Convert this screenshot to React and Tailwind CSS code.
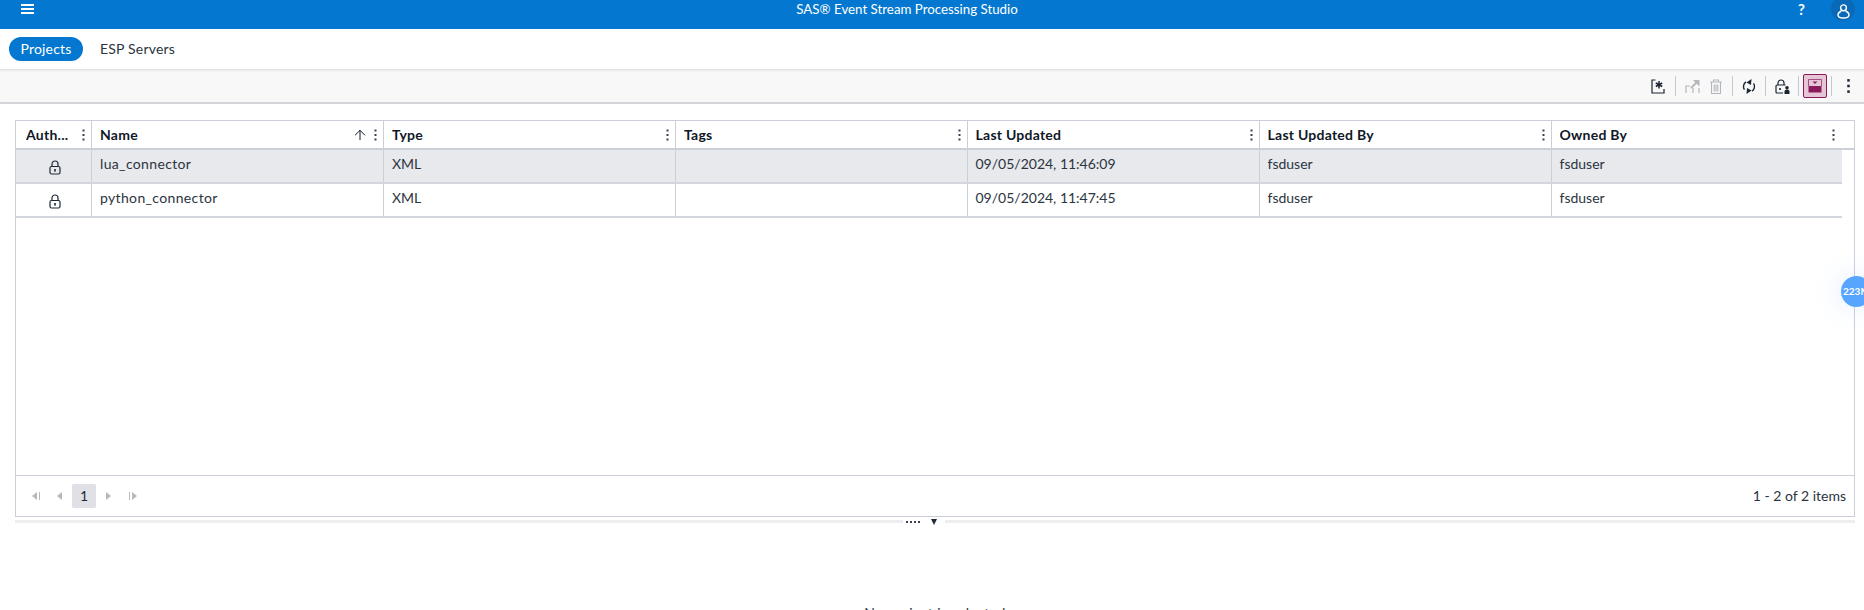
import { ArrowUp } from 'lucide-react'

const FONT = "font-['Lato','Noto_Sans',sans-serif]"
const GRID = 'grid grid-cols-[76px_292px_292px_291.5px_292px_292px_1fr]'

const columns = ['Auth...', 'Name', 'Type', 'Tags', 'Last Updated', 'Last Updated By', 'Owned By']

const rows = [
  { name: 'lua_connector', type: 'XML', updated: '09/05/2024, 11:46:09', by: 'fsduser', owner: 'fsduser', selected: true },
  { name: 'python_connector', type: 'XML', updated: '09/05/2024, 11:47:45', by: 'fsduser', owner: 'fsduser' },
]

function Dots({ className = '' }) {
  return (
    <svg width="3" height="12" viewBox="0 0 3 12" className={className} fill="currentColor">
      <rect x="0.5" y="0.5" width="2" height="2" />
      <rect x="0.5" y="5" width="2" height="2" />
      <rect x="0.5" y="9.5" width="2" height="2" />
    </svg>
  )
}

function Lock() {
  return (
    <svg width="12" height="15" viewBox="0 0 12 15" fill="none" stroke="#1f2937" strokeWidth="1.2">
      <path d="M3 6.5V4a3 3 0 0 1 6 0v2.5" />
      <rect x="1" y="6.5" width="10" height="7.5" rx="1.5" />
      <rect x="5.2" y="9" width="1.6" height="2.6" fill="#1f2937" stroke="none" />
    </svg>
  )
}

function Sep() {
  return <div className="h-5 w-px bg-[#c4c7cc]" />
}

function Toolbar() {
  return (
    <div className="mr-[14.5px] flex h-[34px] items-center justify-end">
      <svg width="14" height="15" viewBox="0 0 14 15" fill="none" stroke="#1b2533" strokeWidth="1.2">
        <path d="M4.500 1H1v13h12v-4" />
        <path d="M8 2v7.500M4.800 4l6.400 3.500M11.200 4l-6.400 3.500" strokeWidth="1.500" />
      </svg>
      <div className="ml-[10px]"><Sep /></div>
      <svg className="ml-[9px]" width="15" height="15" viewBox="0 0 15 15" fill="none" stroke="#b3b7bc" strokeWidth="1.2">
        <path d="M1 14V7h4M8 14V9" />
        <path d="M6 9l6-6" strokeWidth="1.800" />
        <path d="M8 1h6.500v6.500z" fill="#b3b7bc" stroke="none" />
        <path d="M14 9v5" />
      </svg>
      <svg className="ml-[10px]" width="12" height="15" viewBox="0 0 12 15" fill="none" stroke="#b3b7bc" strokeWidth="1.1">
        <path d="M0 3h12M3.500 3V1h5v2M1.500 3v11.500h9V3M4.200 5.500v7M6 5.500v7M7.800 5.500v7" />
      </svg>
      <div className="ml-[10px]"><Sep /></div>
      <svg className="ml-[9px]" width="14" height="15" viewBox="0 0 14 15" fill="none" stroke="#1b2533" strokeWidth="1.400">
        <path d="M4 2.800A5.800 5.800 0 0 0 2.400 10.700" />
        <path d="M10 12.200a5.800 5.800 0 0 0 1.600-7.900" />
        <path d="M9.500 0L4.500 3.500 9 6z" fill="#1b2533" stroke="none" />
        <path d="M4.500 15l5-3.500L5 9z" fill="#1b2533" stroke="none" />
      </svg>
      <div className="ml-[9px]"><Sep /></div>
      <svg className="ml-[9px]" width="15" height="15" viewBox="0 0 15 15" fill="none" stroke="#1b2533" strokeWidth="1.200">
        <path d="M3 6V4a3 3 0 0 1 6 0v2" />
        <path d="M8 14H2a1 1 0 0 1-1-1V7a1 1 0 0 1 1-1h8.500" />
        <circle cx="5" cy="10" r="1.100" fill="#1b2533" stroke="none" />
        <circle cx="12" cy="8.700" r="1.800" fill="#1b2533" stroke="none" />
        <path d="M9.500 15v-2.500a2.500 2 0 0 1 5 0V15z" fill="#1b2533" stroke="none" />
      </svg>
      <div className="ml-[8px]"><Sep /></div>
      <div className="ml-[4px] flex h-6 w-6 items-center justify-center rounded-[2px] border border-[#8b1a5c] bg-[#e6c6d6]">
        <svg width="16" height="16" viewBox="0 0 16 16">
          <rect x="1.500" y="8" width="13" height="6.500" fill="#8b1a5c" />
          <path d="M1.500 8V1.500h13V8" fill="none" stroke="#8b1a5c" strokeWidth="0.700" />
          <path d="M5.500 3.500h5L8 6z" fill="#8b1a5c" />
        </svg>
      </div>
      <div className="ml-[4px]"><Sep /></div>
      <Dots className="ml-[14.5px] scale-[1.25] text-[#1b2533]" />
    </div>
  )
}

function Pager() {
  return (
    <div className="flex items-center text-[#b5b8bd]">
      <svg className="ml-[16px]" width="9" height="8" viewBox="0 0 9 8" fill="currentColor">
        <path d="M5 0v8L0 4zM7 0h1v8H7z" />
      </svg>
      <svg className="ml-[16px]" width="5" height="8" viewBox="0 0 5 8" fill="currentColor">
        <path d="M5 0v8L0 4z" />
      </svg>
      <div className="ml-[10px] flex h-6 w-6 items-center justify-center rounded-[2px] bg-[#dfe1e6] text-sm text-[#1f2937]">1</div>
      <svg className="ml-[10px]" width="5" height="8" viewBox="0 0 5 8" fill="currentColor">
        <path d="M0 0v8l5-4z" />
      </svg>
      <svg className="ml-[17px]" width="9" height="8" viewBox="0 0 9 8" fill="currentColor">
        <path d="M4 0v8l5-4zM1 0h1v8H1z" />
      </svg>
    </div>
  )
}

export default function App() {
  return (
    <div className={`relative h-[610px] overflow-hidden bg-white text-[#2b3440] ${FONT}`}>
      <header className="flex h-[29px] items-start justify-between bg-[#0478d0] text-white">
        <svg className="ml-[21px] mt-[4px]" width="13" height="10" viewBox="0 0 13 10" fill="currentColor">
          <rect width="13" height="2" />
          <rect y="4" width="13" height="2" />
          <rect y="8" width="13" height="2" />
        </svg>
        <span className="mr-[18px] mt-[1px] text-[13.300px] leading-[17px]">SAS® Event Stream Processing Studio</span>
        <div className="flex items-start">
          <span className="mr-[26px] mt-[2px] text-[15px] font-bold leading-[14px]">?</span>
          <div className="mr-[9px] mt-[-3px] flex h-6 w-6 items-center justify-center rounded-full bg-[#0a69b6]">
            <svg className="mt-[5px]" width="13" height="15" viewBox="0 0 13 15" fill="none" stroke="white" strokeWidth="1.400">
              <circle cx="6.500" cy="3.800" r="2.900" />
              <path d="M4.300 7C2 8 1 9.500 1 11c0 2 1.500 3 5.500 3s5.500-1 5.500-3c0-1.500-1-3-3.300-4" />
            </svg>
          </div>
        </div>
      </header>

      <nav className="flex h-[40px] items-center gap-[17px] pl-[9px] text-sm tracking-[0.2px]">
        <div className="flex h-6 w-[74px] items-center justify-center rounded-full bg-[#0478d0] text-white">Projects</div>
        <div>ESP Servers</div>
      </nav>

      <div className="h-[35px] border-b-2 border-[#d3d5d8] bg-[#f8f8f8] shadow-[inset_0_3px_3px_-2px_rgba(0,0,0,0.12)]">
        <Toolbar />
      </div>

      <main className="ml-[15px] mr-[9px] mt-[16px] flex h-[397px] flex-col border border-[#cbd0d8] text-sm">
        <div className={`${GRID} h-[29px] shrink-0 border-b-2 border-[#cbd0d8] font-bold tracking-[0.25px] text-[#111827]`}>
          {columns.map((col, i) => (
            <div key={col} className={`flex items-center pr-[8px] ${i === 0 ? 'pl-[10px]' : 'pl-[8px]'} ${i < 6 ? 'border-r border-[#cbd0d8]' : ''}`}>
              <span className="flex-1 truncate">{col}</span>
              {col === 'Name' && <ArrowUp size={16} strokeWidth={1.500} className="mr-[6px]" />}
              <Dots className={`text-[#374151] ${i < 6 ? 'mr-[-2px]' : 'mr-[11px]'}`} />
            </div>
          ))}
        </div>
        <div className="flex-1 pr-[12px]">
          {rows.map((row) => (
            <div key={row.name} className={`${GRID} h-[34px] border-b-2 border-[#d3d6dc] ${row.selected ? 'bg-[#e8e9ed]' : ''}`}>
              <div className="flex items-center justify-center border-r border-[#cbd0d8] pl-[2px] pt-[3px]"><Lock /></div>
              <div className="border-r border-[#cbd0d8] pl-[8px] pt-[4px] tracking-[0.35px]">{row.name}</div>
              {[row.type, '', row.updated, row.by].map((val, i) => (
                <div key={i} className="border-r border-[#cbd0d8] pl-[8px] pt-[4px]">{val}</div>
              ))}
              <div className="pl-[8px] pt-[4px]">{row.owner}</div>
            </div>
          ))}
        </div>
        <div className="flex h-[41px] shrink-0 items-center justify-between border-t border-[#cbd0d8] pr-[8px]">
          <Pager />
          <span>1 - 2 of 2 items</span>
        </div>
      </main>

      <div className="ml-[15px] mr-[9px] mt-[3px] flex h-[3px] items-center bg-[#eceef0]">
        <div className="ml-[888px] flex h-[8px] w-[42px] items-center gap-[11px] bg-white pl-[3px]">
          <div className="flex gap-[2px]">
            {[0, 1, 2, 3].map((d) => <div key={d} className="h-[2px] w-[2px] bg-[#374151]" />)}
          </div>
          <div className="h-0 w-0 border-x-[3.500px] border-t-[6px] border-x-transparent border-t-[#1f2937]" />
        </div>
      </div>

      <p className="mt-[80px] pl-[6px] text-center text-sm tracking-[0.4px]">No project is selected</p>

      <div className="absolute left-[1841px] top-[276px] flex h-[31px] w-[31px] items-center rounded-full bg-[#57a5ff] pl-[2px] text-[10px] font-bold text-white shadow-[0_0_30px_rgba(87,165,255,0.2)]">
        223M
      </div>
    </div>
  )
}
